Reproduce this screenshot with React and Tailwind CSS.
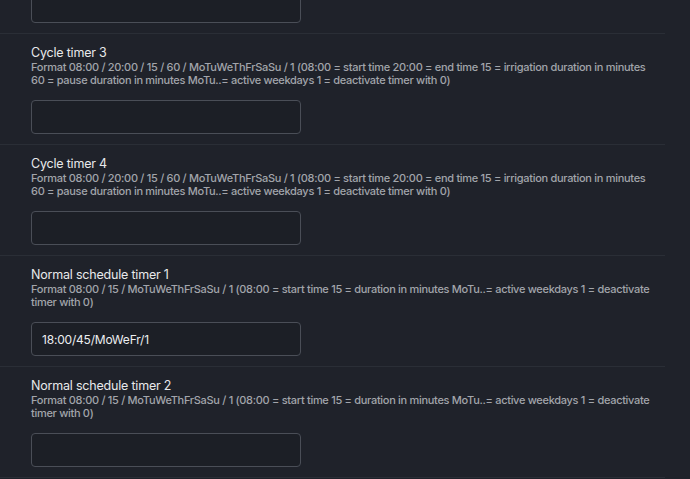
const cycleDesc =
  'Format 08:00 / 20:00 / 15 / 60 / MoTuWeThFrSaSu / 1 (08:00 = start time 20:00 = end time 15 = irrigation duration in minutes 60 = pause duration in minutes MoTu..= active weekdays 1 = deactivate timer with 0)';
const normalDesc =
  'Format 08:00 / 15 / MoTuWeThFrSaSu / 1 (08:00 = start time 15 = duration in minutes MoTu..= active weekdays 1 = deactivate timer with 0)';

const settings = [
  { title: 'Cycle timer 3', desc: cycleDesc, value: '' },
  { title: 'Cycle timer 4', desc: cycleDesc, value: '' },
  { title: 'Normal schedule timer 1', desc: normalDesc, value: '18:00/45/MoWeFr/1' },
  { title: 'Normal schedule timer 2', desc: normalDesc, value: '' },
];

const TextBox = ({ value }) => (
  <input
    readOnly
    value={value}
    className="block h-[34px] w-[270px] rounded-[4px] border border-[#4a4e57] bg-[#1c1f26] px-[10px] text-[12px] tracking-[-0.2px] text-[#eceef0] outline-none"
  />
);

const SettingRow = ({ title, desc, value }) => (
  <div className="w-[665px] border-b border-[#2a2e36] pl-[31px] pr-[10px] pt-[10px] pb-[10px]">
    <h3 className="text-[12.5px] leading-[17px] tracking-[-0.2px] text-[#e8e9eb]">{title}</h3>
    <p className="text-[11px] leading-[13px] font-medium tracking-[-0.3px] text-[#a2a5ab]">{desc}</p>
    <div className="mt-[13px]">
      <TextBox value={value} />
    </div>
  </div>
);

export default function App() {
  return (
    <div
      className="h-[479px] w-[690px] overflow-hidden bg-[#1f222a]"
      style={{ fontFamily: 'Inter, "Noto Sans", sans-serif' }}
    >
      <div className="-mt-[11px] w-[665px] border-b border-[#2a2e36] pl-[31px] pb-[10px]">
        <TextBox value="" />
      </div>
      {settings.map((s) => (
        <SettingRow key={s.title} {...s} />
      ))}
    </div>
  );
}
